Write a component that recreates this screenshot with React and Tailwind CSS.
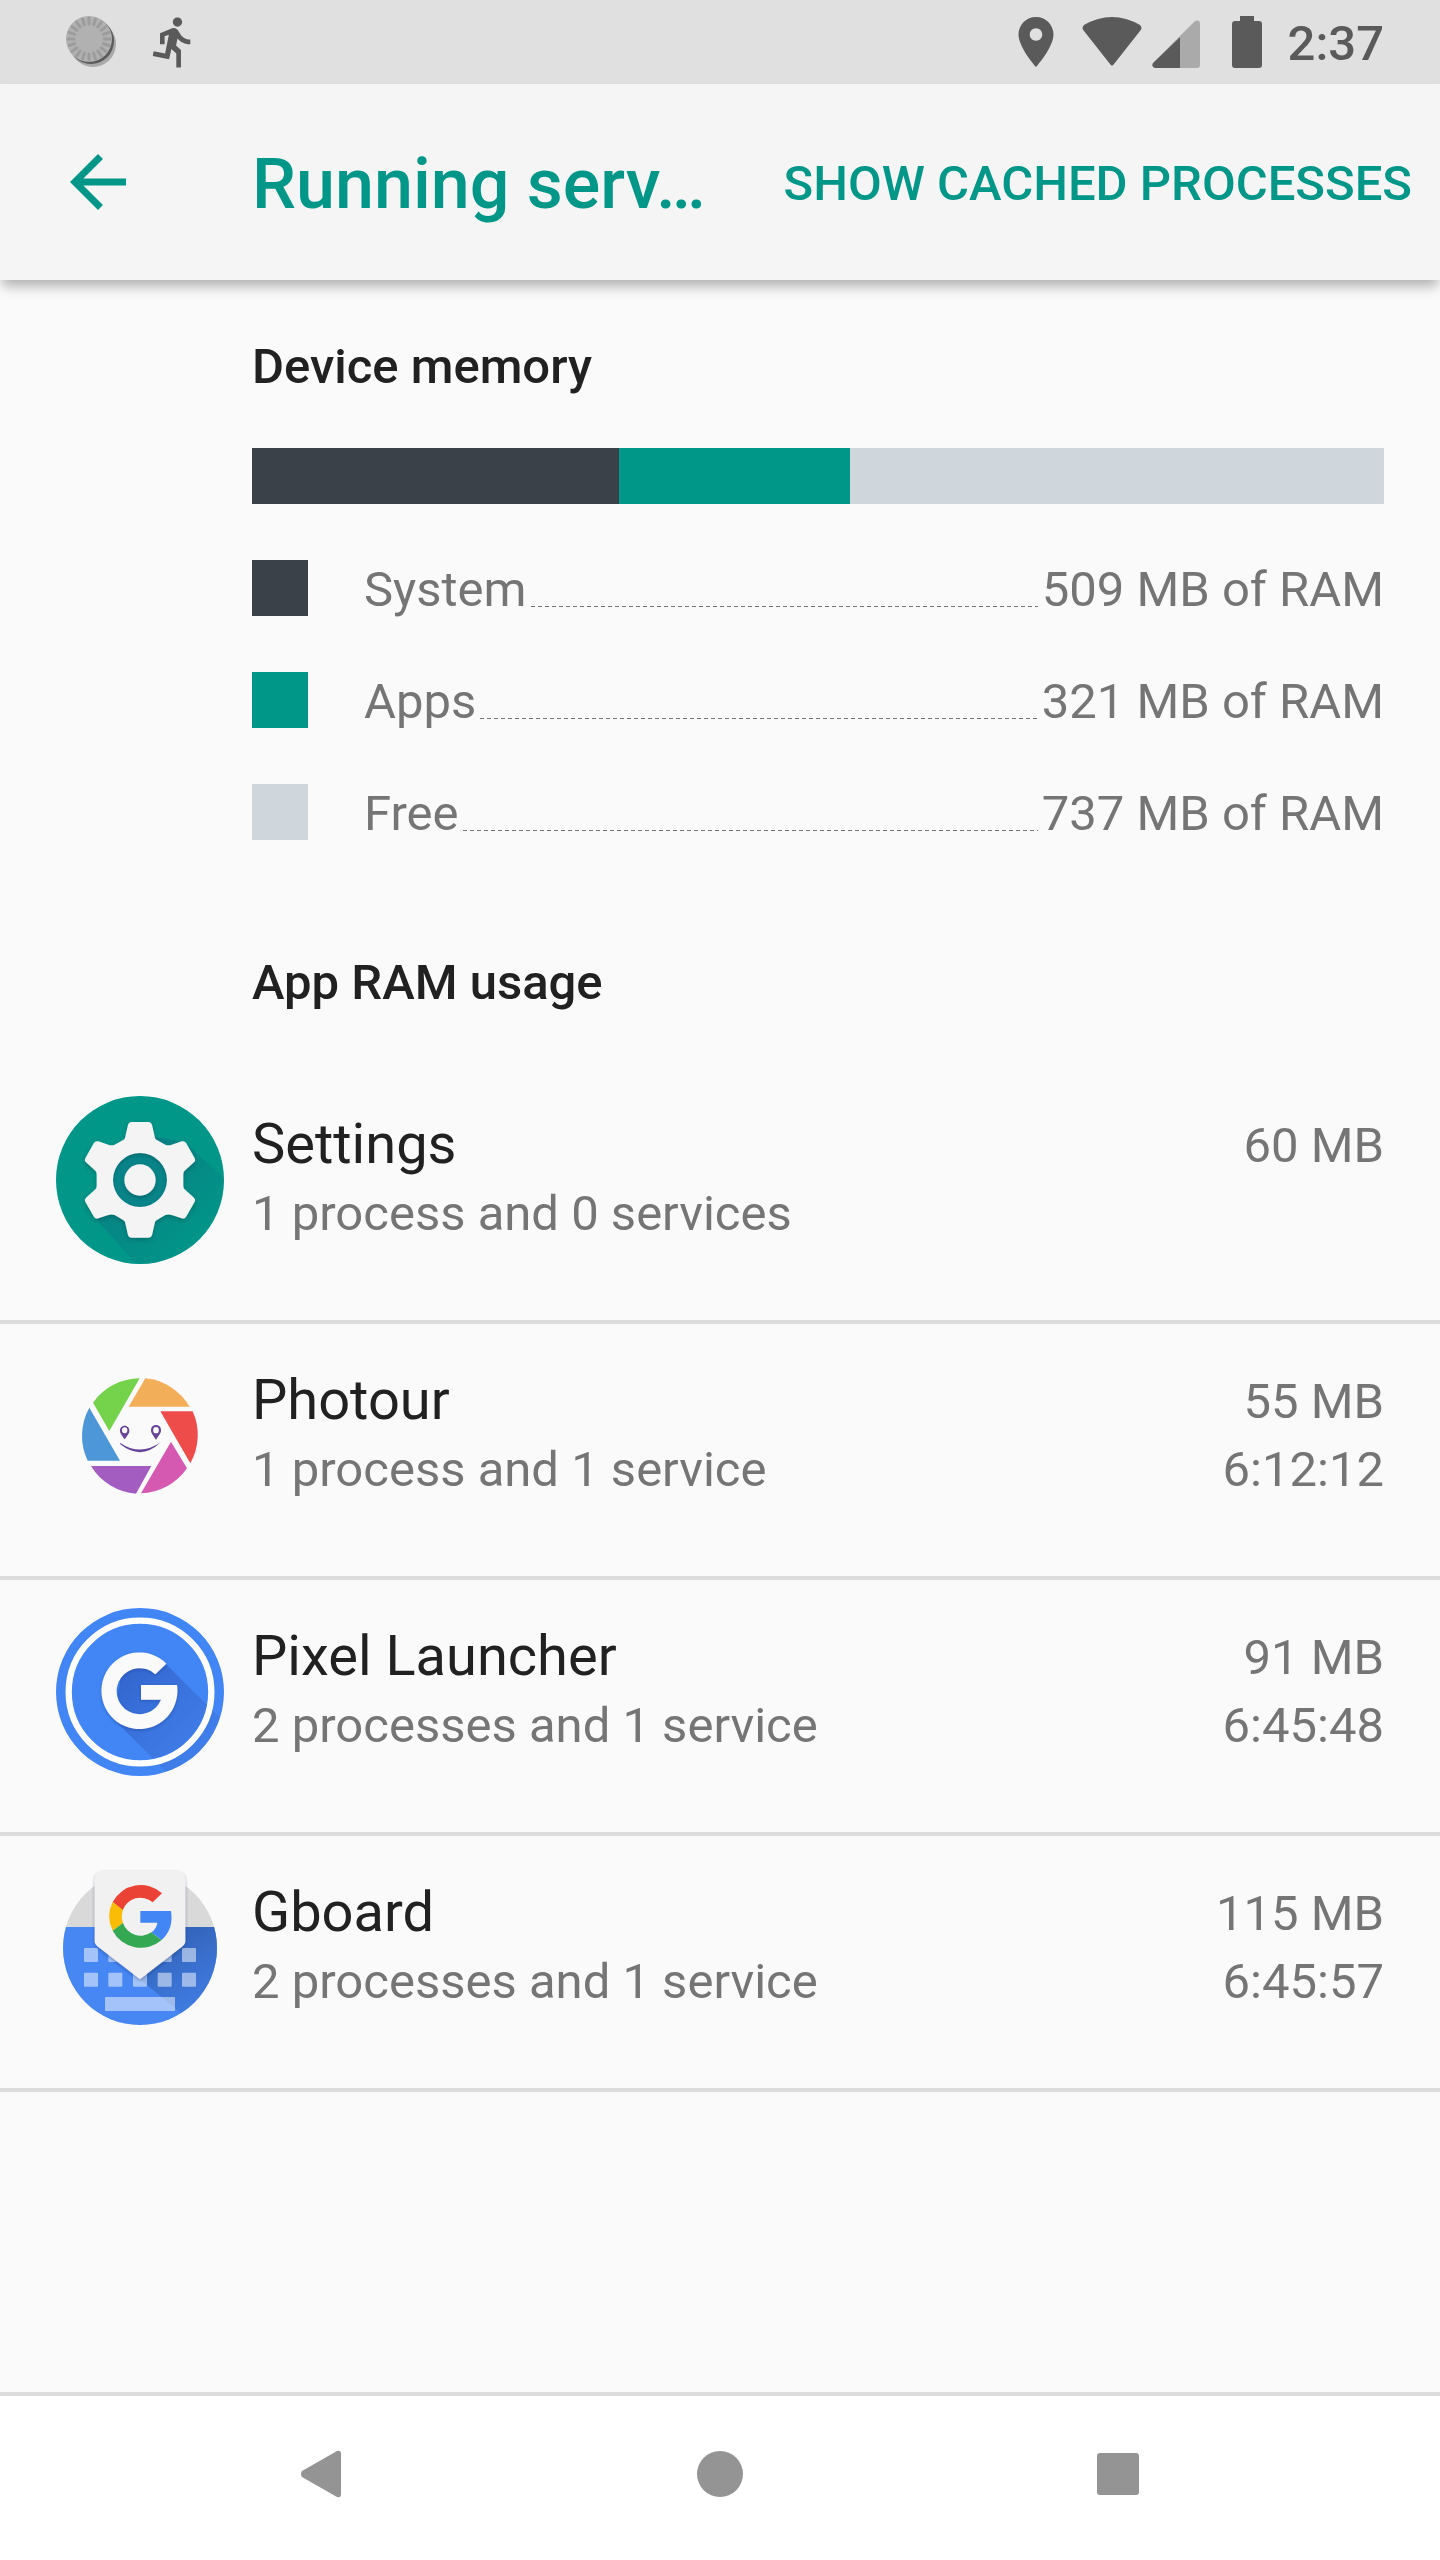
const memory = [
  { label: "System", value: "509 MB of RAM", amount: 509, color: "bg-[#3a4149]" },
  { label: "Apps", value: "321 MB of RAM", amount: 321, color: "bg-[#009688]" },
  { label: "Free", value: "737 MB of RAM", amount: 740, color: "bg-[#cfd6dc]" },
];

const apps = [
  { name: "Settings", detail: "1 process and 0 services", size: "60 MB", time: "", Icon: SettingsIcon },
  { name: "Photour", detail: "1 process and 1 service", size: "55 MB", time: "6:12:12", Icon: PhotourIcon },
  { name: "Pixel Launcher", detail: "2 processes and 1 service", size: "91 MB", time: "6:45:48", Icon: LauncherIcon },
  { name: "Gboard", detail: "2 processes and 1 service", size: "115 MB", time: "6:45:57", Icon: GboardIcon },
];

const ticks = Array.from({ length: 20 }, (_, i) => i * 18);

function SettingsIcon() {
  return (
    <svg viewBox="0 0 504 504" className="size-full" aria-hidden="true">
      <defs>
        <linearGradient id="gearShade" x1="200" y1="200" x2="430" y2="430" gradientUnits="userSpaceOnUse">
          <stop offset="0" stopColor="#0b7a83" stopOpacity="0.8" />
          <stop offset="1" stopColor="#0b7a83" stopOpacity="0.05" />
        </linearGradient>
        <clipPath id="gearDisc"><circle cx="252" cy="252" r="252" /></clipPath>
        <filter id="gearDrop" x="-20%" y="-20%" width="140%" height="140%">
          <feDropShadow dx="0" dy="6" stdDeviation="7" floodColor="#003c3c" floodOpacity="0.4" />
        </filter>
      </defs>
      <g clipPath="url(#gearDisc)">
        <rect width="504" height="504" fill="#009688" />
        <path d="M387 138L560 300V560H290L120 368L210 300L280 120Z" fill="url(#gearShade)" />
        <circle cx="252" cy="252" r="90" fill="#08858a" />
      </g>
      <g filter="url(#gearDrop)">
        <path
          fill="#f4f4f4"
          fillRule="evenodd"
          d="M226 78H278Q286 78 288 86L297 126Q299 131 304 133L328 146Q338 150 347 146L377 136Q385 134 390 140L417 188Q419 195 414 199L386 224Q382 228 382 235V269Q382 276 386 280L414 305Q419 310 417 316L390 363Q385 369 377 367L347 357Q338 354 328 357L304 371Q299 373 297 378L288 418Q286 425 278 425H226Q218 425 216 418L207 378Q205 373 200 371L176 357Q166 354 157 357L127 367Q119 369 114 363L87 316Q85 310 90 305L118 280Q122 276 122 269V235Q122 228 118 224L90 199Q85 195 87 188L114 140Q119 134 127 136L157 146Q166 150 176 146L200 133Q205 131 207 126L216 86Q218 78 226 78ZM252 171A81 81 0 1 0 252 333A81 81 0 1 0 252 171Z"
        />
        <circle cx="252" cy="252" r="47" fill="#f4f4f4" />
      </g>
    </svg>
  );
}

function PhotourIcon() {
  return (
    <svg viewBox="-12 -42 504 504" className="size-full" aria-hidden="true">
      <g transform="translate(0 -48)">
        <path fill="#75d24b" d="M239 85L148 243L99 158A173 173 0 0 1 239 85Z" />
        <path fill="#f3ae59" d="M256 85A173 173 0 0 1 389 170H206Z" />
        <path fill="#ee4c4b" d="M301 184H398A173 173 0 0 1 391 340Z" />
        <path fill="#d659b1" d="M333 275L381 355A173 173 0 0 1 243 430Z" />
        <path fill="#a35dc0" d="M93 348H274L228 431A173 173 0 0 1 93 348Z" />
        <path fill="#4d97d8" d="M88 173L180 332H83A173 173 0 0 1 88 173Z" />
        <g fill="#654499">
          <path fillRule="evenodd" d="M194 227C185 227 180 234 180 242C180 252 188 258 194 268C200 258 208 252 208 242C208 234 203 227 194 227ZM194 232A8 9 0 1 1 194 250A8 9 0 1 1 194 232Z" />
          <path fillRule="evenodd" d="M288 225C278 225 273 232 273 241C273 252 282 258 288 270C294 258 303 252 303 241C303 232 298 225 288 225ZM288 231A8 9 0 1 1 288 250A8 9 0 1 1 288 231Z" />
          <path d="M180 278Q240 320 302 277Q244 333 181 283Z" />
        </g>
      </g>
    </svg>
  );
}

function LauncherIcon() {
  return (
    <svg viewBox="0 0 504 504" className="size-full" aria-hidden="true">
      <defs>
        <linearGradient id="launchShade" x1="180" y1="180" x2="420" y2="420" gradientUnits="userSpaceOnUse">
          <stop offset="0" stopColor="#3060c8" stopOpacity="0.9" />
          <stop offset="1" stopColor="#3868cc" stopOpacity="0.3" />
        </linearGradient>
        <clipPath id="launchDisc"><circle cx="252" cy="252" r="252" /></clipPath>
        <filter id="launchDrop" x="-20%" y="-20%" width="140%" height="140%">
          <feDropShadow dx="0" dy="4" stdDeviation="5" floodColor="#163a86" floodOpacity="0.4" />
        </filter>
      </defs>
      <g clipPath="url(#launchDisc)">
        <rect width="504" height="504" fill="#4286f5" />
        <path d="M329 167L560 398V560H399L173 334L196 200L254 170Z" fill="url(#launchShade)" />
      </g>
      <circle cx="252" cy="252" r="214" fill="none" stroke="#fff" strokeWidth="19" />
      <path
        filter="url(#launchDrop)"
        fill="#fafafa"
        d="M331 167A114 115 0 1 0 363 231H255V275H315A69 69 0 1 1 298 199Z"
      />
    </svg>
  );
}

function GboardIcon() {
  return (
    <svg viewBox="0 -6 504 504" className="size-full" aria-hidden="true">
      <defs>
        <linearGradient id="keyShade" x1="330" y1="200" x2="440" y2="420" gradientUnits="userSpaceOnUse">
          <stop offset="0" stopColor="#2f5cae" stopOpacity="0.85" />
          <stop offset="1" stopColor="#2f5cae" stopOpacity="0.25" />
        </linearGradient>
        <clipPath id="keyDisc"><circle cx="252" cy="246" r="231" /></clipPath>
        <filter id="keyDrop" x="-20%" y="-20%" width="140%" height="140%">
          <feDropShadow dx="0" dy="4" stdDeviation="5" floodColor="#12295a" floodOpacity="0.4" />
        </filter>
      </defs>
      <g clipPath="url(#keyDisc)">
        <rect width="504" height="504" fill="#d9d9d9" />
        <rect y="183" width="504" height="321" fill="#4687f4" />
        <path d="M388 183H504V480H422L252 340L388 225Z" fill="url(#keyShade)" />
      </g>
      <g fill="#fff" fillOpacity="0.5">
        {[84, 157, 231, 305, 378].map((x) => (
          <g key={x}>
            <rect x={x} y="246" width="42" height="42" rx="3" />
            <rect x={x} y="320" width="42" height="42" rx="3" />
          </g>
        ))}
        <rect x="147" y="393" width="210" height="42" rx="3" />
      </g>
      <path filter="url(#keyDrop)" fill="#f1f1f1" d="M140 15H364Q388 18 388 42V228Q387 236 380 241L252 340L124 241Q117 236 116 228V42Q116 18 140 15Z" />
      <path fill="#ea4335" d="M318 82L290 109A56 56 0 0 0 200 133L170 108A95 95 0 0 1 318 82Z" />
      <path fill="#fbbc05" d="M170 108L201 132A57 57 0 0 0 201 171L170 194A95 95 0 0 1 170 108Z" />
      <path fill="#34a853" d="M170 194L201 171A56 56 0 0 0 286 199L317 222A95 95 0 0 1 170 194Z" />
      <path fill="#4285f4" d="M253 135H345Q354 188 317 222L286 199Q301 189 304 170H253Z" />
    </svg>
  );
}

function StatusBar() {
  return (
    <div className="flex h-[84px] items-center bg-[#e0e0e0] pr-14 pl-16 text-[#5a5a5a]">
      <svg viewBox="0 0 54 54" className="size-[54px]" aria-hidden="true">
        <circle cx="29" cy="29" r="23" fill="#a9a9a9" />
        <circle cx="27" cy="26" r="23" fill="#5a5a5a" />
        <circle cx="25" cy="24" r="23" fill="#b1b1b1" />
        <g stroke="#9c9c9c" strokeWidth="3" strokeLinecap="round">
          {ticks.map((a) => (
            <path key={a} d="M25 3V9" transform={`rotate(${a} 25 24)`} />
          ))}
        </g>
      </svg>
      <svg viewBox="0 0 24 24" fill="currentColor" className="ml-7 size-[56px]" aria-hidden="true">
        <path d="M13.49 5.48c1.1 0 2-.9 2-2s-.9-2-2-2-2 .9-2 2 .9 2 2 2zm-3.6 13.9l1-4.4 2.1 2v6h2v-7.5l-2.1-2 .6-3c1.3 1.5 3.3 2.5 5.5 2.5v-2c-1.9 0-3.500-1-4.300-2.400l-1-1.600c-.4-.6-1-1-1.700-1-.3 0-.5.1-.8.1l-5.200 2.200v4.700h2v-3.400l1.800-.7-1.600 8.100-4.900-1-.4 2 7 1.400z" />
      </svg>
      <div className="ml-auto flex items-center">
        <svg viewBox="0 0 24 24" fill="currentColor" className="size-[60px]" aria-hidden="true">
          <path d="M12 2C8.130 2 5 5.130 5 9c0 5.250 7 13 7 13s7-7.750 7-13c0-3.870-3.130-7-7-7zm0 9.500c-1.380 0-2.500-1.120-2.500-2.500s1.120-2.500 2.500-2.500 2.500 1.120 2.500 2.500-1.120 2.500-2.500 2.500z" />
        </svg>
        <svg viewBox="0 0 60 50" fill="currentColor" className="ml-4 h-[50px] w-[60px]" aria-hidden="true">
          <path d="M2 14Q-1 11 2 8Q30 -8 58 8Q61 11 58 14L32 47Q30 50 28 47Z" />
        </svg>
        <svg viewBox="0 0 48 48" fill="currentColor" className="mt-1 ml-[10px] size-[48px]" aria-hidden="true">
          <path d="M1 43L43 1Q48 -1 48 4V45Q48 48 45 48H28V17Z" opacity="0.4" />
          <path d="M1 43L28 17V48H3Q-1 47 1 43Z" />
        </svg>
        <svg viewBox="0 0 30 52" fill="currentColor" className="ml-8 h-[52px] w-[30px]" aria-hidden="true">
          <path d="M8 0H22V5H27Q30 5 30 8V49Q30 52 27 52H3Q0 52 0 49V8Q0 5 3 5H8Z" />
        </svg>
        <span className="ml-[26px] pt-1 text-[49px] leading-[56px] font-medium">2:37</span>
      </div>
    </div>
  );
}

export default function App() {
  return (
    <div className="flex min-h-screen flex-col bg-[#fafafa] font-[Roboto,sans-serif] text-[#212121]">
      <StatusBar />
      <header className="flex h-[196px] items-center bg-[#f5f5f5] pr-7 pl-14 text-[#009688] shadow-[0_8px_12px_-2px_rgba(0,0,0,0.3)]">
        <button type="button" aria-label="Back" className="mr-[112px] shrink-0">
          <svg viewBox="0 0 24 24" fill="currentColor" className="size-[84px]" aria-hidden="true">
            <path d="M20 11H7.830l5.590-5.590L12 4l-8 8 8 8 1.410-1.410L7.830 13H20v-2z" />
          </svg>
        </button>
        <h1 className="flex-1 pt-1 text-[70px] leading-[84px] font-medium whitespace-nowrap">Running serv…</h1>
        <button type="button" className="shrink-0 pt-1 text-[49px] leading-[56px] font-medium whitespace-nowrap">
          SHOW CACHED PROCESSES
        </button>
      </header>

      <main className="flex-1">
        <section className="pt-14 pr-14 pl-[252px]">
          <h2 className="text-[49px] leading-[62px] font-medium">Device memory</h2>
          <div className="mt-[50px] flex h-14">
            {memory.map((m) => (
              <div key={m.label} className={m.color} style={{ flexGrow: m.amount }} />
            ))}
          </div>
          <ul className="mt-14 flex flex-col gap-14">
            {memory.map((m) => (
              <li key={m.label} className="flex h-14 items-center text-[49px] leading-[56px] text-[#757575]">
                <span className={`mr-14 size-14 ${m.color}`} />
                <span className="pt-1">{m.label}</span>
                <span className="mx-1 mt-9 h-px flex-1 bg-[repeating-linear-gradient(90deg,#757575_0_4px,transparent_4px_7px)]" />
                <span className="pt-1">{m.value}</span>
              </li>
            ))}
          </ul>
        </section>

        <h2 className="mt-28 pl-[252px] text-[49px] leading-[62px] font-medium">App RAM usage</h2>

        <ul className="mt-[54px]">
          {apps.map(({ name, detail, size, time, Icon }) => (
            <li key={name} className="flex h-64 items-start border-b-4 border-[#dcdcdc] px-14 pt-7">
              <div className="mr-7 size-[168px] shrink-0">
                <Icon />
              </div>
              <div className="min-w-0 flex-1 pt-3">
                <h3 className="text-[56px] leading-[72px]">{name}</h3>
                <p className="text-[49px] leading-[68px] text-[#757575]">{detail}</p>
              </div>
              <div className="pt-4 text-right text-[49px] leading-[68px] text-[#757575]">
                <p>{size}</p>
                <p>{time}</p>
              </div>
            </li>
          ))}
        </ul>
      </main>

      <nav className="flex h-[168px] items-center justify-center gap-[342px] border-t-4 border-[#dcdcdc] bg-white pb-2 text-[#949494]">
        <button type="button" aria-label="Back">
          <svg viewBox="0 0 56 56" fill="currentColor" className="size-14" aria-hidden="true">
            <path d="M8 25L43 5Q47 4 47 8V48Q47 52 43 51L8 31Q6 28 8 25Z" />
          </svg>
        </button>
        <button type="button" aria-label="Home">
          <svg viewBox="0 0 56 56" fill="currentColor" className="size-14" aria-hidden="true">
            <circle cx="28" cy="28" r="23" />
          </svg>
        </button>
        <button type="button" aria-label="Recent apps">
          <svg viewBox="0 0 56 56" fill="currentColor" className="size-14" aria-hidden="true">
            <rect x="7" y="7" width="42" height="42" rx="3" />
          </svg>
        </button>
      </nav>
    </div>
  );
}
